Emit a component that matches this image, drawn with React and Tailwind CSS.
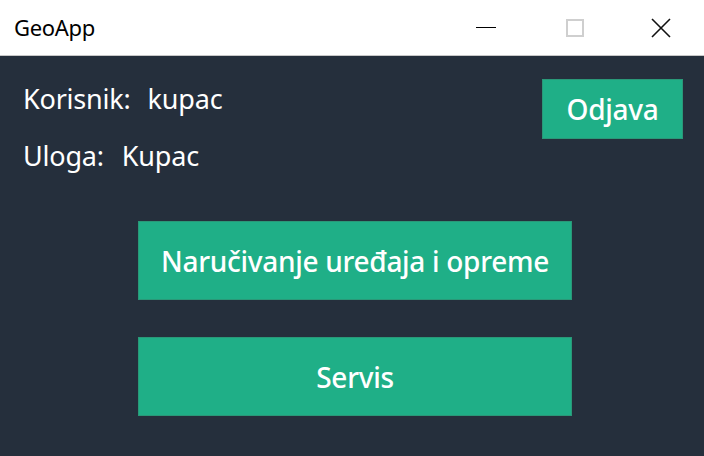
import React from 'react';

const App = () => {
  return (
    <div className="w-[704px] h-[456px] flex flex-col bg-[#252f3c] overflow-hidden" style={{ fontFamily: '"Noto Sans", "Open Sans", sans-serif' }}>
      <div className="h-[56px] bg-white border-b border-[#c8c8c8] flex items-center shrink-0">
        <span className="pl-[14px] text-[22px] text-black flex-1 tracking-[-0.3px]">GeoApp</span>
        <div className="flex h-full items-center">
          <div className="w-[92px] h-full flex items-center justify-center">
            <div className="w-[20px] h-[1.5px] bg-black" />
          </div>
          <div className="w-[86px] h-full flex items-center justify-center">
            <div className="w-[18px] h-[18px] border-2 border-[#cfcfcf]" />
          </div>
          <div className="w-[86px] h-full flex items-center justify-center">
            <svg width="20" height="20" viewBox="0 0 20 20">
              <path d="M1 1 L19 19 M19 1 L1 19" stroke="#111" strokeWidth="1.6" fill="none" />
            </svg>
          </div>
        </div>
      </div>

      <div className="flex-1 flex flex-col px-[23px] pt-[23px]">
        <div className="flex justify-between">
          <div className="flex flex-col text-white text-[27px] gap-[21px] leading-[36px] pt-[2px] tracking-[-0.2px]">
            <div>Korisnik:<span className="ml-[17px]">kupac</span></div>
            <div>Uloga:<span className="ml-[18px]">Kupac</span></div>
          </div>
          <button className="w-[141px] h-[60px] mr-[-2px] bg-[#1faf87] text-white text-[28px] font-medium tracking-[-0.3px] border border-[#2a9878]">
            Odjava
          </button>
        </div>

        <div className="flex flex-col items-start gap-[37px] mt-[47px] ml-[115px]">
          <button className="w-[434px] h-[79px] bg-[#1faf87] text-white text-[28px] font-medium tracking-[-0.3px] border border-[#2a9878]">
            Naručivanje uređaja i opreme
          </button>
          <button className="w-[434px] h-[79px] bg-[#1faf87] text-white text-[28px] font-medium tracking-[-0.3px] border border-[#2a9878]">
            Servis
          </button>
        </div>
      </div>
    </div>
  );
};

export default App;
